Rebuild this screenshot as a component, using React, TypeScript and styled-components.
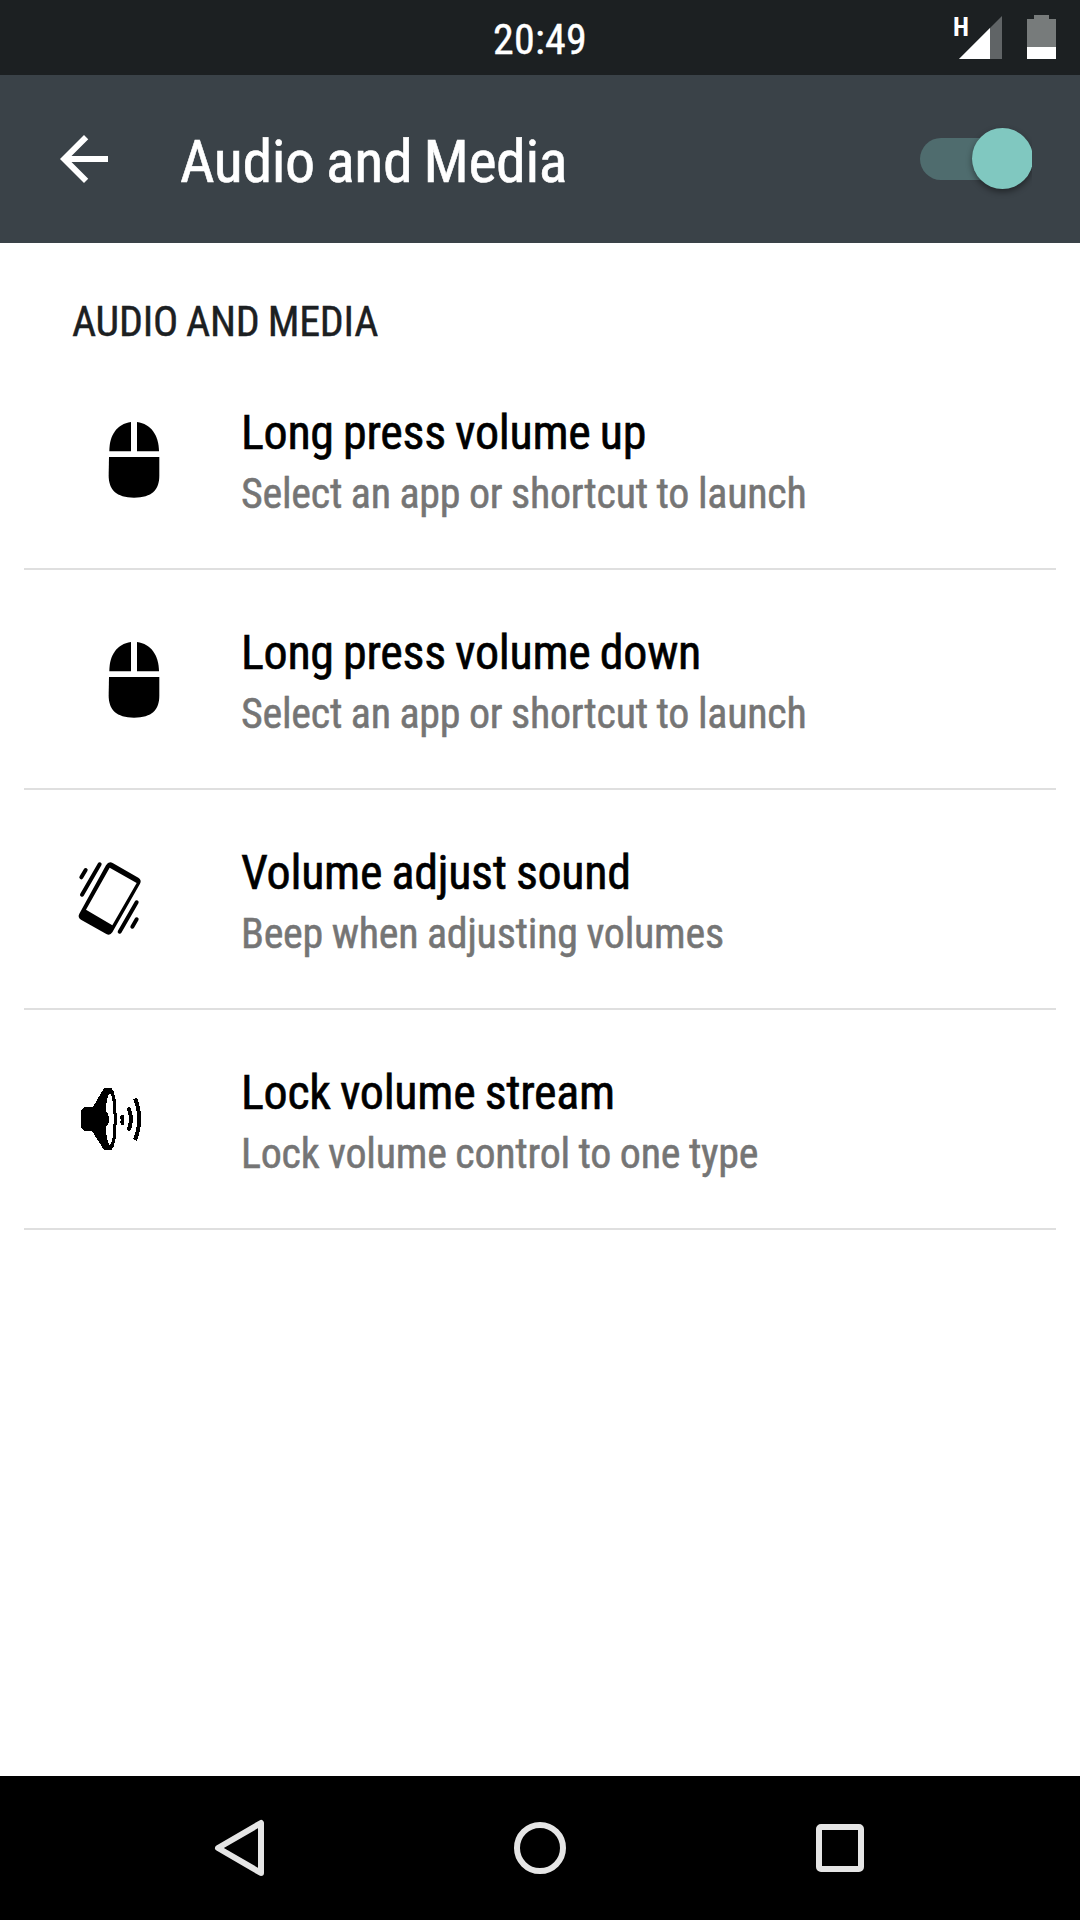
import React from 'react';
import styled, { createGlobalStyle } from 'styled-components';

const GlobalStyle = createGlobalStyle`
  *, *::before, *::after { box-sizing: border-box; }
  body {
    margin: 0;
    background: #ffffff;
    font-family: 'Roboto Condensed', Roboto, sans-serif;
    font-stretch: condensed;
  }
`;

const Screen = styled.div`
  display: flex;
  flex-direction: column;
  width: 1080px;
  height: 1920px;
  overflow: hidden;
  background: #ffffff;
`;

const StatusBar = styled.header`
  display: grid;
  grid-template-columns: 1fr auto 1fr;
  flex: none;
  height: 75px;
  padding-right: 24px;
  padding-left: 24px;
  background: #1c2022;
  color: #ffffff;
`;

const Clock = styled.time`
  grid-column: 2;
  padding-top: 15px;
  font-size: 42px;
  letter-spacing: 0.3px;
  line-height: 50px;
  -webkit-text-stroke: 0.4px currentColor;
`;

const StatusIcons = styled.div`
  display: flex;
  justify-content: flex-end;
  padding-top: 15px;
`;

const NetworkType = styled.span`
  margin-right: -10px;
  font-size: 26px;
  font-weight: 700;
  line-height: 24px;
`;

const Battery = styled.svg`
  margin-left: 25px;
`;

const AppBar = styled.div`
  display: flex;
  align-items: center;
  flex: none;
  height: 168px;
  padding: 0 48px;
  background: #3a4248;
  color: #ffffff;
`;

const BackButton = styled.button`
  display: flex;
  width: 72px;
  height: 72px;
  padding: 0;
  border: 0;
  background: none;
  color: inherit;
`;

const Title = styled.h1`
  flex: 1;
  margin: 5px 0 0 60px;
  font-size: 60px;
  font-weight: 400;
  letter-spacing: -0.45px;
  word-spacing: -2px;
  line-height: 72px;
  white-space: nowrap;
  -webkit-text-stroke: 0.6px currentColor;
`;

const Switch = styled.button`
  display: flex;
  align-items: center;
  width: 112px;
  height: 84px;
  padding: 0;
  border: 0;
  background: none;
  overflow: hidden;
`;

const Track = styled.span`
  display: flex;
  align-items: center;
  justify-content: flex-end;
  width: 113px;
  height: 42px;
  flex: none;
  border-radius: 21px;
  background: #4f6c6e;
`;

const Thumb = styled.span`
  flex: none;
  width: 61px;
  height: 61px;
  margin-bottom: 1px;
  border-radius: 50%;
  background: #80c8c0;
  box-shadow: 0 3px 6px rgba(0, 0, 0, 0.42);
`;

const Content = styled.main`
  flex: 1;
  padding: 0 24px;
`;

const SectionTitle = styled.h2`
  height: 107px;
  margin: 0;
  padding: 54px 0 0 48px;
  color: #1c2022;
  font-size: 42px;
  font-weight: 400;
  letter-spacing: -0.25px;
  word-spacing: -1.2px;
  line-height: 50px;
  -webkit-text-stroke: 0.4px currentColor;
`;

const List = styled.ul`
  margin: 0;
  padding: 0;
  list-style: none;
`;

const Row = styled.li`
  display: flex;
  align-items: center;
  height: 220px;
  padding-left: 36px;
  border-bottom: 2px solid #dfdfdf;
`;

const RowText = styled.div`
  display: flex;
  flex-direction: column;
  gap: 1px;
  margin-left: 61px;
  padding-top: 11px;
  white-space: nowrap;
`;

const RowTitle = styled.span`
  color: #000000;
  font-size: 48px;
  letter-spacing: -0.27px;
  word-spacing: -1.5px;
  line-height: 58px;
  -webkit-text-stroke: 0.6px currentColor;
`;

const RowSummary = styled.span`
  color: #757575;
  font-size: 42px;
  letter-spacing: -0.25px;
  word-spacing: -0.7px;
  line-height: 62px;
  -webkit-text-stroke: 0.5px currentColor;
`;

const NavBar = styled.nav`
  display: flex;
  justify-content: center;
  align-items: center;
  gap: 228px;
  flex: none;
  height: 144px;
  background: #000000;
`;

const NavButton = styled.button`
  display: flex;
  width: 72px;
  height: 72px;
  padding: 0;
  border: 0;
  background: none;
  color: #e5e5e5;
`;

const MouseIcon = () => (
  <svg width="120" height="110" viewBox="30 342 360 330">
    <path d="M243 396V484H178C178 436 200 402 243 396Z" />
    <path d="M261 396V484H327C326 436 304 402 261 396Z" />
    <path d="M177 501H328V556C328 600 306 623 252 623C199 623 176 600 176 556Z" />
  </svg>
);

const VibrateIcon = () => (
  <svg width="120" height="110" viewBox="0 12 360 330">
    <path
      fillRule="evenodd"
      d="M158 69L235 113Q246 120 240 131L157 277Q150 288 139 282L63 239Q52 232 58 221L138 76Q146 63 158 69ZM149 83L78 209L157 256L230 129Z"
    />
    <g fill="none" stroke="#000" strokeWidth="12" strokeLinecap="round">
      <path d="M119 73L66 164" />
      <path d="M77 90L64 112" />
      <path d="M230 187L179 275" />
      <path d="M230 238L217 260" />
    </g>
  </svg>
);

const SpeakerIcon = () => (
  <svg width="120" height="110" viewBox="0 -18 360 330" shapeRendering="crispEdges">
    <path
      fillRule="evenodd"
      d="M132 54H155C166 66 170 100 170 147C170 194 166 228 155 240H132L96 183H75Q63 178 63 165V129Q63 114 75 111H99ZM150 69C143 75 138 98 137 123Q147 130 147 148Q147 165 137 171C138 198 143 220 150 226C156 220 161 193 161 147C161 101 156 75 150 69Z"
    />
    <path d="M183 135H192V165H183V159H180V153H183V147H180V138H183Z" />
    <g fill="none" stroke="#000" strokeWidth="12">
      <path d="M205 112Q221 147 205 182" />
      <path d="M225 85Q250 147 225 210" />
    </g>
  </svg>
);

const items = [
  { Icon: MouseIcon, title: 'Long press volume up', summary: 'Select an app or shortcut to launch' },
  { Icon: MouseIcon, title: 'Long press volume down', summary: 'Select an app or shortcut to launch' },
  { Icon: VibrateIcon, title: 'Volume adjust sound', summary: 'Beep when adjusting volumes' },
  { Icon: SpeakerIcon, title: 'Lock volume stream', summary: 'Lock volume control to one type' },
];

export default function App() {
  return (
    <Screen>
      <GlobalStyle />
      <StatusBar>
        <Clock>20:49</Clock>
        <StatusIcons>
          <NetworkType>H</NetworkType>
          <svg width="43" height="44" viewBox="0 0 43 44">
            <path d="M0 44L43 1V44Z" fill="#606466" />
            <path d="M0 44L31 13V44Z" fill="#ffffff" />
          </svg>
          <Battery width="29" height="44" viewBox="0 0 29 44">
            <path d="M7 0H22V4H29V44H0V4H7Z" fill="#777b7b" />
            <path d="M0 32H29V44H0Z" fill="#ffffff" />
          </Battery>
        </StatusIcons>
      </StatusBar>
      <AppBar>
        <BackButton aria-label="Back">
          <svg width="72" height="72" viewBox="0 0 24 24" fill="currentColor">
            <path d="M20 11H7.83l5.59-5.59L12 4l-8 8 8 8 1.41-1.41L7.83 13H20v-2z" />
          </svg>
        </BackButton>
        <Title>Audio and Media</Title>
        <Switch role="switch" aria-checked="true" aria-label="Audio and Media">
          <Track>
            <Thumb />
          </Track>
        </Switch>
      </AppBar>
      <Content>
        <SectionTitle>AUDIO AND MEDIA</SectionTitle>
        <List>
          {items.map(({ Icon, title, summary }) => (
            <Row key={title}>
              <Icon />
              <RowText>
                <RowTitle>{title}</RowTitle>
                <RowSummary>{summary}</RowSummary>
              </RowText>
            </Row>
          ))}
        </List>
      </Content>
      <NavBar>
        <NavButton aria-label="Back">
          <svg width="72" height="72" viewBox="0 0 72 72" fill="none" stroke="currentColor" strokeWidth="6" strokeLinejoin="round">
            <path d="M57 11V61L14 36Z" />
          </svg>
        </NavButton>
        <NavButton aria-label="Home">
          <svg width="72" height="72" viewBox="0 0 72 72" fill="none" stroke="currentColor" strokeWidth="6">
            <circle cx="36" cy="36" r="23" />
          </svg>
        </NavButton>
        <NavButton aria-label="Recent apps">
          <svg width="72" height="72" viewBox="0 0 72 72" fill="none" stroke="currentColor" strokeWidth="6">
            <rect x="15" y="15" width="42" height="42" rx="2" />
          </svg>
        </NavButton>
      </NavBar>
    </Screen>
  );
}
